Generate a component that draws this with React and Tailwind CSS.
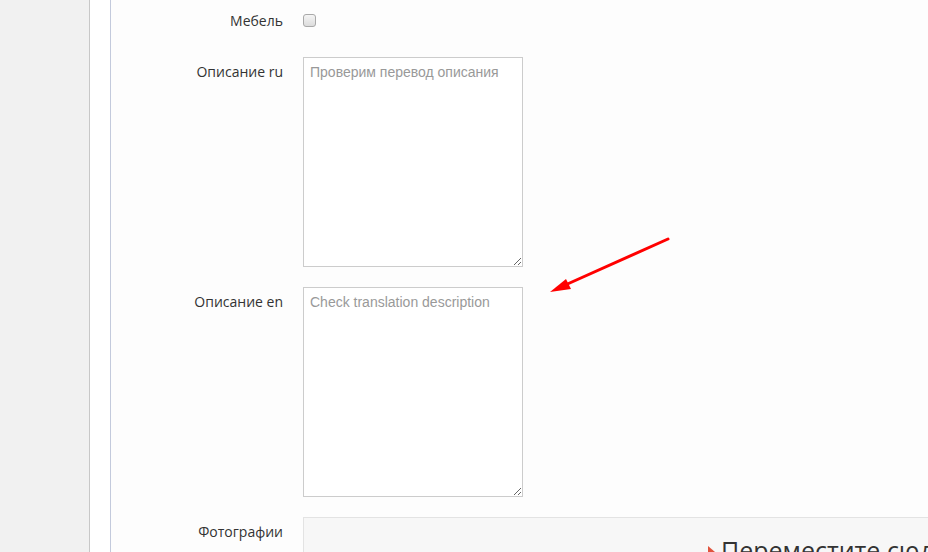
import React from 'react'

const label = "w-[172px] shrink-0 text-right text-[14px] leading-[20px] text-[#333] [font-family:'Open_Sans',sans-serif]"

function Row({ title, children, className = '', labelPad = 'pt-[5px]' }) {
  return (
    <div className={`flex gap-[20px] ${className}`}>
      <div className={`${label} ${labelPad}`}>{title}</div>
      {children}
    </div>
  )
}

function Area({ placeholder }) {
  return (
    <textarea
      placeholder={placeholder}
      className="w-[220px] h-[210px] shrink-0 border border-[#cccccc] bg-white px-[6px] pt-[5px] text-[14px] leading-[18px] text-[#555] placeholder:text-[#999] [font-family:'Liberation_Sans',Arial,sans-serif] outline-none"
    />
  )
}

export default function App() {
  return (
    <div className="relative flex h-[552px] w-[928px] overflow-hidden bg-white">
      <div className="w-[90px] shrink-0 border-r border-[#c8c8c8] bg-[#f1f1f1]" />
      <div className="w-[21px] shrink-0 border-r border-[#c3cadc] bg-white" />

      <div className="flex-1 bg-[#fdfdfd]">
        <Row title="Мебель" className="h-[57px] pt-[11px]" labelPad="pt-0">
          <div className="mt-[3px] h-[13px] w-[13px] rounded-[3px] border border-[#a9a9a9] bg-gradient-to-b from-[#f5f5f5] to-[#dcdcdc]" />
        </Row>

        <Row title="Описание ru" className="mb-[20px]">
          <Area placeholder="Проверим перевод описания" />
        </Row>

        <Row title="Описание en" className="mb-[20px]">
          <Area placeholder="Check translation description" />
        </Row>

        <Row title="Фотографии">
          <div className="h-[80px] flex-1 border border-[#e3e3e3] bg-[#f7f7f7] pl-[404px] pt-[17px]">
            <div className="flex items-center gap-[6px] whitespace-nowrap">
              <span className="mt-[4px] h-0 w-0 border-y-[6px] border-l-[7px] border-y-transparent border-l-[#e0533d]" />
              <span className="text-[25px] leading-[30px] text-[#333] [font-family:'Open_Sans',sans-serif]">
                Переместите сюда файлы
              </span>
            </div>
          </div>
        </Row>
      </div>

      <svg className="pointer-events-none absolute left-0 top-0" width="928" height="552">
        <line x1="668" y1="239" x2="563" y2="286" stroke="#ff0000" strokeWidth="3" strokeLinecap="round" />
        <polygon points="550,292 566,279 571,289" fill="#ff0000" />
      </svg>
    </div>
  )
}
